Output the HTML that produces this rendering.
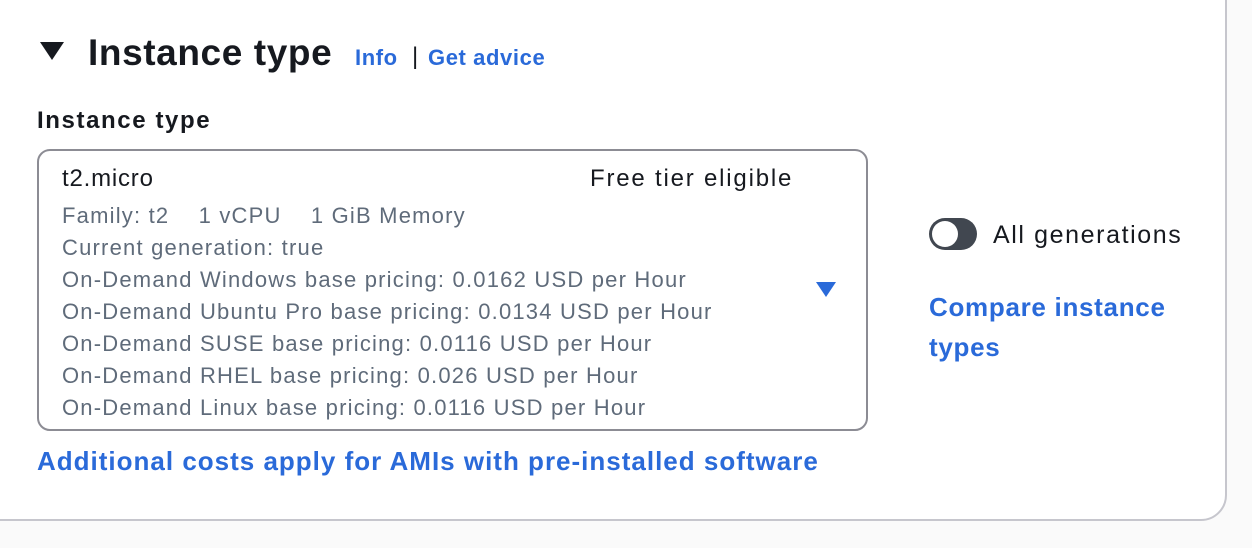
<!DOCTYPE html>
<html><head><style>
body{margin:0;width:1252px;height:548px;background:#fafafa;font-family:"Liberation Sans",sans-serif;position:relative;overflow:hidden}
.card{position:absolute;left:-30px;top:-30px;width:1257px;height:551px;background:#fff;border:2px solid #c6c6cd;border-radius:26px;box-sizing:border-box}
.a{position:absolute;white-space:nowrap}
.blue{color:#2a6ad9;font-weight:bold}
.g{color:#5f6b7a;font-size:22px;left:62px;letter-spacing:1.2px}
</style></head><body>
<div class="card"></div>
<svg class="a" style="left:40px;top:42px" width="25" height="19"><polygon points="0,0 24,0 12,18" fill="#16191f"/></svg>
<div class="a" style="left:88px;top:32px;font-size:37px;font-weight:bold;color:#16191f;letter-spacing:0.6px">Instance type</div>
<div class="a blue" style="left:355px;top:45px;font-size:22px;letter-spacing:0.6px">Info</div>
<div class="a" style="left:412px;top:43px;font-size:24px;color:#16191f">|</div>
<div class="a blue" style="left:428px;top:45px;font-size:22px;letter-spacing:0.6px">Get advice</div>
<div class="a" style="left:37px;top:107px;font-size:24px;font-weight:bold;color:#16191f;letter-spacing:1.6px">Instance type</div>
<div class="a" style="left:37px;top:149px;width:831px;height:282px;border:2px solid #8c8c94;border-radius:13px;box-sizing:border-box"></div>
<div class="a" style="left:62px;top:165px;font-size:24px;color:#16191f;letter-spacing:0.8px">t2.micro</div>
<div class="a" style="left:590px;top:165px;font-size:24px;color:#16191f;letter-spacing:1.8px">Free tier eligible</div>
<div class="a g" style="top:203px">Family: t2&nbsp;&nbsp;&nbsp;&nbsp;1 vCPU&nbsp;&nbsp;&nbsp;&nbsp;1 GiB Memory</div>
<div class="a g" style="top:235px">Current generation: true</div>
<div class="a g" style="top:267px">On-Demand Windows base pricing: 0.0162 USD per Hour</div>
<div class="a g" style="top:299px">On-Demand Ubuntu Pro base pricing: 0.0134 USD per Hour</div>
<div class="a g" style="top:331px">On-Demand SUSE base pricing: 0.0116 USD per Hour</div>
<div class="a g" style="top:363px">On-Demand RHEL base pricing: 0.026 USD per Hour</div>
<div class="a g" style="top:395px">On-Demand Linux base pricing: 0.0116 USD per Hour</div>
<svg class="a" style="left:816px;top:282px" width="21" height="16"><polygon points="0,0 20,0 10,15" fill="#2a6ad9"/></svg>
<div class="a" style="left:929px;top:218px;width:48px;height:32px;border-radius:16px;background:#414750"></div>
<div class="a" style="left:932px;top:221px;width:26px;height:26px;border-radius:13px;background:#fff"></div>
<div class="a" style="left:993px;top:221px;font-size:25px;color:#16191f;letter-spacing:1.6px">All generations</div>
<div class="a blue" style="left:929px;top:287px;font-size:26px;line-height:40px;letter-spacing:0.7px">Compare instance<br>types</div>
<div class="a blue" style="left:37px;top:446px;font-size:26px;letter-spacing:1px">Additional costs apply for AMIs with pre-installed software</div>
</body></html>
